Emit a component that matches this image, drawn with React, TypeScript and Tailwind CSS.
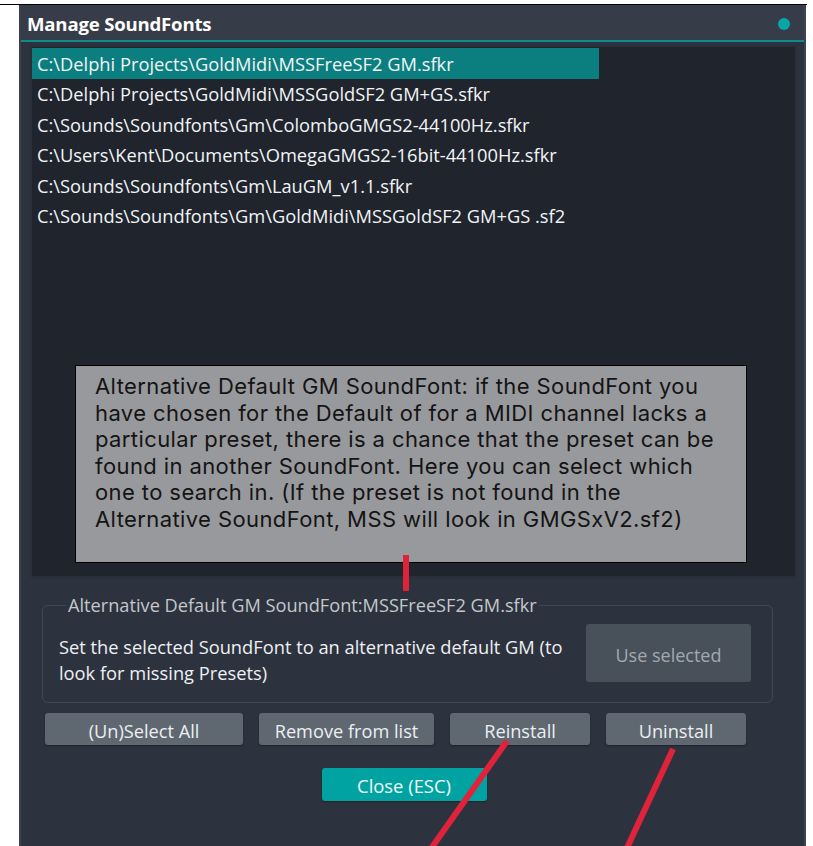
import type { FC } from "react";

const soundFonts = [
  "C:\\Delphi Projects\\GoldMidi\\MSSFreeSF2 GM.sfkr",
  "C:\\Delphi Projects\\GoldMidi\\MSSGoldSF2 GM+GS.sfkr",
  "C:\\Sounds\\Soundfonts\\Gm\\ColomboGMGS2-44100Hz.sfkr",
  "C:\\Users\\Kent\\Documents\\OmegaGMGS2-16bit-44100Hz.sfkr",
  "C:\\Sounds\\Soundfonts\\Gm\\LauGM_v1.1.sfkr",
  "C:\\Sounds\\Soundfonts\\Gm\\GoldMidi\\MSSGoldSF2 GM+GS .sf2",
];

const hintLines = [
  "Alternative Default GM SoundFont: if the SoundFont you",
  "have chosen for the Default of for a MIDI channel lacks a",
  "particular preset, there is a chance that the preset can be",
  "found in another SoundFont. Here you can select which",
  "one to search in. (If the preset is not found in the",
  "Alternative SoundFont, MSS will look in GMGSxV2.sf2)",
];

const ActionButton: FC<{ label: string; width: string }> = ({ label, width }) => (
  <button
    className={`${width} h-[32px] rounded-[3px] bg-[#5f6770] pt-[3px] text-[18.2px] leading-[24px] text-[#eceff1] shadow-[0_1px_2px_rgba(0,0,0,0.35)]`}
  >
    {label}
  </button>
);

export default function App() {
  return (
    <div
      className="relative h-[846px] w-[813px] overflow-hidden bg-white"
      style={{ fontFamily: "'Open Sans', 'Noto Sans', sans-serif" }}
    >
      <div className="h-[4px]" />
      <div className="h-[1px] w-[807px] bg-black" />

      {/* dialog window */}
      <div className="ml-[19px] flex h-[841px] w-[787px] flex-col border-l-2 border-r-2 border-l-[#3b414c] border-r-[#3e4550] bg-[#2d333e]">
        <div className="flex h-[35px] items-center justify-between bg-[#363c48] pl-[6px] pr-[14px] pt-[3px]">
          <span className="text-[18.6px] font-bold tracking-[-0.2px] text-white">Manage SoundFonts</span>
          <span className="h-[12px] w-[12px] rounded-full bg-[#0aa5a5]" />
        </div>
        <div className="h-[2px] bg-[#0f8b8b]" />

        <div className="flex flex-col pl-[9px] pr-[7px]">
          {/* soundfont list */}
          <div className="mt-[3px] h-[533px] border-2 border-[#2a303a] bg-[#1f242d] pt-[1px]">
            {soundFonts.map((path, i) => (
              <div
                key={path}
                className={`flex h-[30.5px] w-[567px] items-center pl-[5px] text-[18.3px] text-[#f2f4f5] ${
                  i === 0 ? "bg-[#0b7f80]" : ""
                }`}
              >
                {path}
              </div>
            ))}
          </div>

          {/* alternative default group */}
          <fieldset className="ml-[12px] mt-[15px] h-[110px] w-[731px] rounded-[6px] border border-[#414855] pl-[16px] pr-[21px]">
            <legend className="ml-[7px] px-[2px] text-[18.2px] leading-[24px] text-[#c4c7cb]">
              Alternative Default GM SoundFont:MSSFreeSF2 GM.sfkr
            </legend>
            <div className="mt-[7px] flex items-start justify-between">
              <p className="mt-[10px] text-[18.3px] leading-[26px] text-[#eef0f2]">
                Set the selected SoundFont to an alternative default GM (to
                <br />
                look for missing Presets)
              </p>
              <button className="h-[58px] w-[165px] rounded-[3px] bg-[#48505a] pt-[5px] text-[18px] text-[#a3a8ae]">
                Use selected
              </button>
            </div>
          </fieldset>

          <div className="ml-[15px] mt-[10px] flex gap-[16px]">
            <ActionButton label="(Un)Select All" width="w-[198px]" />
            <ActionButton label="Remove from list" width="w-[175px]" />
            <ActionButton label="Reinstall" width="w-[140px]" />
            <ActionButton label="Uninstall" width="w-[140px]" />
          </div>

          <div className="mt-[23px] flex justify-center pr-[19px]">
            <button className="h-[33px] w-[165px] rounded-[3px] bg-[#00a3a2] pt-[3px] text-[18.4px] leading-[24px] text-[#f2fbfb] shadow-[0_1px_2px_rgba(0,0,0,0.35)]">
              Close (ESC)
            </button>
          </div>
        </div>
      </div>

      {/* hover hint over the list */}
      <div
        className="absolute left-[75px] top-[365px] h-[198px] w-[672px] border border-black bg-[#98999c] pl-[19px] pt-[7px] text-[22px] leading-[26.6px] tracking-[0.4px] text-[#141414]"
        style={{ fontFamily: "Inter, 'Open Sans', sans-serif" }}
      >
        {hintLines.map((line) => (
          <div key={line}>{line}</div>
        ))}
      </div>

      {/* red annotation strokes */}
      <svg className="pointer-events-none absolute left-0 top-0" width="813" height="846">
        <line x1="406" y1="555" x2="406" y2="591" stroke="#e0233b" strokeWidth="6" />
        <line x1="507" y1="741" x2="430" y2="850" stroke="#e0233b" strokeWidth="6" />
        <line x1="673" y1="749" x2="626" y2="850" stroke="#e0233b" strokeWidth="6" />
      </svg>
    </div>
  );
}
